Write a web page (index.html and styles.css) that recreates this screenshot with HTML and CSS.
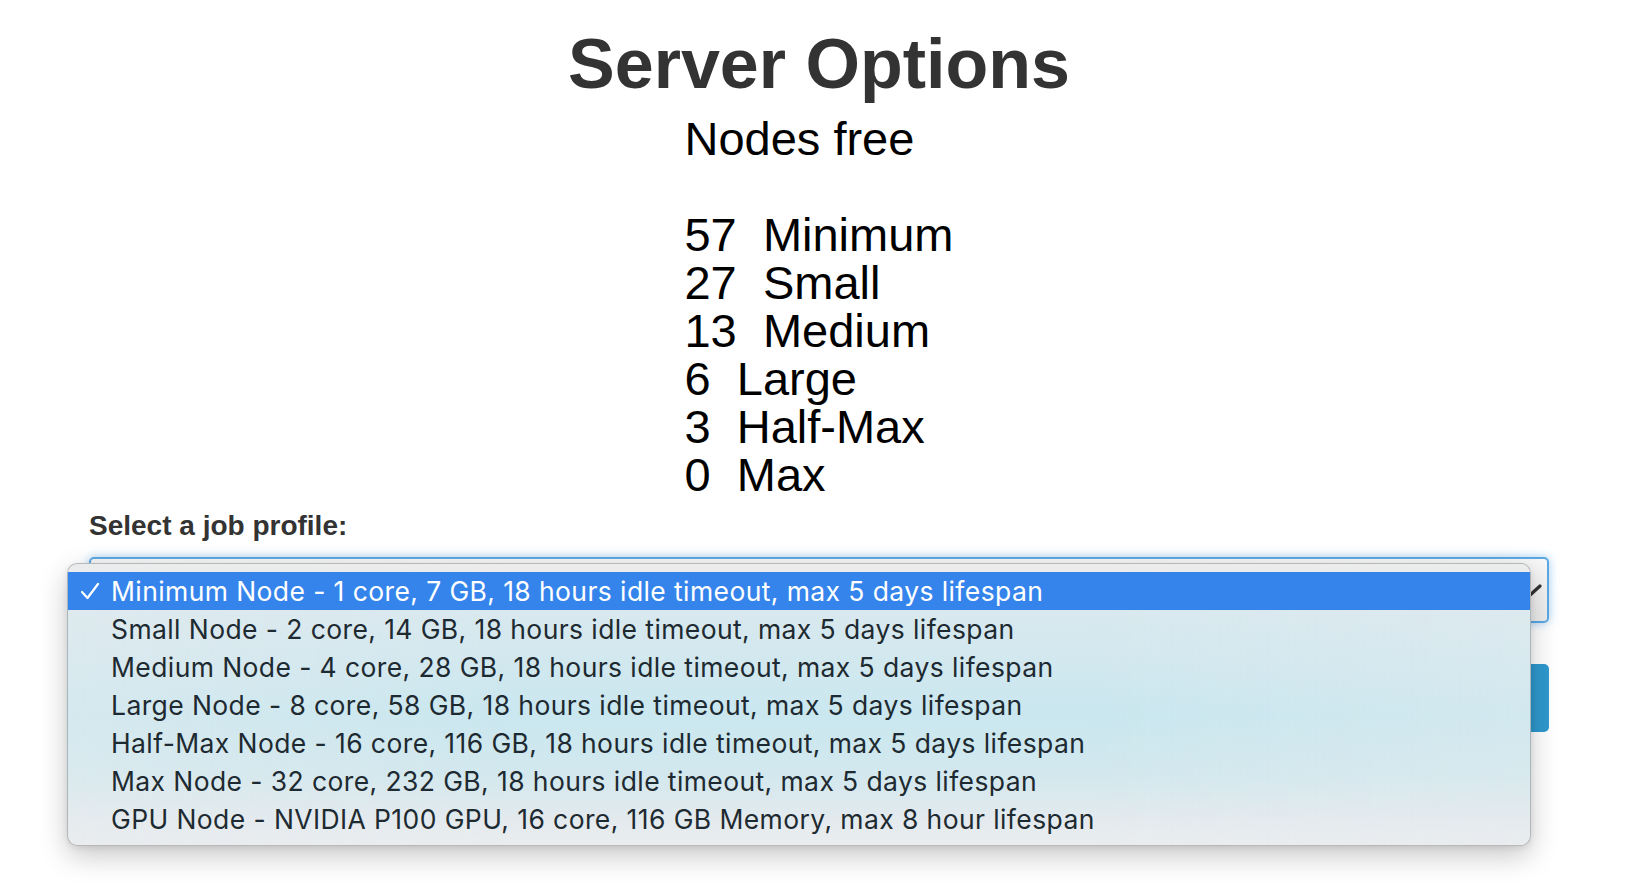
FILE: index.html
```html
<!DOCTYPE html>
<html lang="en">
<head>
<meta charset="utf-8">
<title>Server Options</title>
<link rel="stylesheet" href="styles.css">
</head>
<body>
<div class="container">
  <h1 class="title">Server Options</h1>
  <div class="nodes">Nodes free

57  Minimum
27  Small
13  Medium
6  Large
3  Half-Max
0  Max</div>
  <label class="field-label">Select a job profile:</label>
  <div class="select-box">
    <svg class="chevron" width="26" height="16" viewBox="0 0 26 16"><polyline points="2,3 13,13 24,3" fill="none" stroke="#333" stroke-width="3.2" stroke-linecap="round" stroke-linejoin="round"/></svg>
  </div>
  <div class="btn-start" aria-label="Start"></div>

  <div class="popup">
    <div class="opt selected"><span class="check"><svg width="20" height="18" viewBox="0 0 20 18"><polyline points="2,10 7.5,16 18,2" fill="none" stroke="#fff" stroke-width="2.2" stroke-linecap="round" stroke-linejoin="round"/></svg></span><span>Minimum Node - 1 core, 7 GB, 18 hours idle timeout, max 5 days lifespan</span></div>
    <div class="opt"><span class="check"></span><span>Small Node - 2 core, 14 GB, 18 hours idle timeout, max 5 days lifespan</span></div>
    <div class="opt"><span class="check"></span><span>Medium Node - 4 core, 28 GB, 18 hours idle timeout, max 5 days lifespan</span></div>
    <div class="opt"><span class="check"></span><span>Large Node - 8 core, 58 GB, 18 hours idle timeout, max 5 days lifespan</span></div>
    <div class="opt"><span class="check"></span><span>Half-Max Node - 16 core, 116 GB, 18 hours idle timeout, max 5 days lifespan</span></div>
    <div class="opt"><span class="check"></span><span>Max Node - 32 core, 232 GB, 18 hours idle timeout, max 5 days lifespan</span></div>
    <div class="opt"><span class="check"></span><span>GPU Node - NVIDIA P100 GPU, 16 core, 116 GB Memory, max 8 hour lifespan</span></div>
  </div>
</div>
</body>
</html>
```
FILE: styles.css
```css
* { box-sizing: border-box; }
html, body { margin: 0; padding: 0; background: #fff; }
body {
  font-family: "Liberation Sans", Arial, Helvetica, sans-serif;
  color: #333;
  min-height: 888px;
}

.container {
  position: relative;
  margin-left: 89px;
  width: 1460px;
  padding-top: 26px;
  padding-bottom: 150px;
}

.title {
  margin: 0;
  font-size: 70px;
  line-height: 77px;
  font-weight: 700;
  color: #333;
  text-align: center;
}

.nodes {
  margin: 12px auto 0;
  width: max-content;
  white-space: pre;
  font-size: 47px;
  line-height: 48px;
  color: #000;
}

.field-label {
  display: block;
  margin-top: 7px;
  margin-bottom: 11px;
  font-size: 28px;
  line-height: 40px;
  font-weight: 700;
  color: #333;
}

.select-box {
  height: 66px;
  border: 2px solid #5ca8e4;
  border-radius: 5px;
  background: linear-gradient(180deg, #f7f7f7, #ededed);
  box-shadow: 0 0 10px rgba(102, 175, 233, 0.6);
  display: flex;
  align-items: center;
  justify-content: flex-end;
  padding-right: 5px;
}
.chevron { display: block; margin-top: 2px; }

.btn-start {
  margin-top: 41px;
  height: 68px;
  border-radius: 5px;
  background: #2f99ce;
}

.popup {
  position: absolute;
  left: -22px;
  top: 563px;
  width: 1464px;
  padding: 8px 0 7px;
  border: 1px solid rgba(0, 0, 0, 0.22);
  border-radius: 10px;
  overflow: hidden;
  background:
    linear-gradient(90deg, rgba(232,236,238,0.35) 0%, rgba(232,236,238,0) 30%, rgba(232,236,238,0) 70%, rgba(232,236,238,0.25) 100%),
    linear-gradient(180deg, #ececec 0px, #ececec 8px, #dde9ee 9px, #d3e8ef 90px, #cae7ef 150px, #d2e8ee 210px, #e3eaee 255px, #ebedef 283px);
  box-shadow: 0 10px 28px rgba(0, 0, 0, 0.22), 0 2px 6px rgba(0, 0, 0, 0.08);
  font-family: Inter, "Liberation Sans", sans-serif;
  font-size: 26.5px;
  letter-spacing: 0.4px;
  color: #1e2a31;
}

.opt {
  display: flex;
  align-items: center;
  height: 38px;
  line-height: 38px;
  white-space: nowrap;
}
.opt.selected {
  background: #3584ec;
  color: #fff;
}
.check {
  width: 43px;
  flex: none;
  display: flex;
  align-items: center;
  padding-left: 12px;
}
.check svg { display: block; }
```
